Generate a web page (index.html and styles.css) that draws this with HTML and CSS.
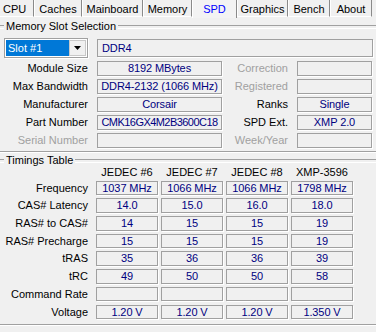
FILE: index.html
```html
<!DOCTYPE html>
<html>
<head>
    <link rel="stylesheet" href="styles.css">
</head>
<body>
    <div class="tabs">
        <div class="tab" style="width: 34px">CPU</div>
        <div class="tab" style="width: 48px">Caches</div>
        <div class="tab" style="width: 61px">Mainboard</div>
        <div class="tab" style="width: 49px">Memory</div>
        <div class="tab active" style="width: 45px">SPD</div>
        <div class="tab" style="width: 51px">Graphics</div>
        <div class="tab" style="width: 42px">Bench</div>
        <div class="tab" style="width: 42px">About</div>
    </div>

    <div class="panel">
        <div class="group-head"><span>Memory Slot Selection</span></div>

        <div class="slot-row">
            <div class="combo">
                <div class="combo-value">Slot #1</div>
                <div class="combo-btn">
                    <svg width="7" height="4" viewBox="0 0 7 4"><polygon points="0,0 7,0 3.5,4" fill="#000"/></svg>
                </div>
            </div>
            <div class="field type-field">DDR4</div>
        </div>

        <div class="info-grid">
            <div class="lbl">Module Size</div>
            <div class="field">8192 MBytes</div>
            <div class="lbl off">Correction</div>
            <div class="field"></div>

            <div class="lbl">Max Bandwidth</div>
            <div class="field">DDR4-2132 (1066 MHz)</div>
            <div class="lbl off">Registered</div>
            <div class="field"></div>

            <div class="lbl">Manufacturer</div>
            <div class="field">Corsair</div>
            <div class="lbl">Ranks</div>
            <div class="field">Single</div>

            <div class="lbl">Part Number</div>
            <div class="field tight">CMK16GX4M2B3600C18</div>
            <div class="lbl">SPD Ext.</div>
            <div class="field">XMP 2.0</div>

            <div class="lbl off">Serial Number</div>
            <div class="field"></div>
            <div class="lbl off">Week/Year</div>
            <div class="field"></div>
        </div>
        <div class="group-end"></div>

        <div class="group-head timings-head"><span>Timings Table</span></div>

        <div class="timing-grid">
            <div></div>
            <div class="col-head">JEDEC #6</div>
            <div class="col-head">JEDEC #7</div>
            <div class="col-head">JEDEC #8</div>
            <div class="col-head">XMP-3596</div>

            <div class="lbl">Frequency</div>
            <div class="field">1037 MHz</div>
            <div class="field">1066 MHz</div>
            <div class="field">1066 MHz</div>
            <div class="field">1798 MHz</div>

            <div class="lbl">CAS# Latency</div>
            <div class="field">14.0</div>
            <div class="field">15.0</div>
            <div class="field">16.0</div>
            <div class="field">18.0</div>

            <div class="lbl">RAS# to CAS#</div>
            <div class="field">14</div>
            <div class="field">15</div>
            <div class="field">15</div>
            <div class="field">19</div>

            <div class="lbl">RAS# Precharge</div>
            <div class="field">15</div>
            <div class="field">15</div>
            <div class="field">15</div>
            <div class="field">19</div>

            <div class="lbl">tRAS</div>
            <div class="field">35</div>
            <div class="field">36</div>
            <div class="field">36</div>
            <div class="field">39</div>

            <div class="lbl">tRC</div>
            <div class="field">49</div>
            <div class="field">50</div>
            <div class="field">50</div>
            <div class="field">58</div>

            <div class="lbl">Command Rate</div>
            <div class="field"></div>
            <div class="field"></div>
            <div class="field"></div>
            <div class="field"></div>

            <div class="lbl">Voltage</div>
            <div class="field">1.20 V</div>
            <div class="field">1.20 V</div>
            <div class="field">1.20 V</div>
            <div class="field">1.350 V</div>
        </div>
        <div class="group-end bottom"></div>
    </div>
</body>
</html>
```

FILE: styles.css
```css
* {
    box-sizing: border-box;
}

body {
    margin: 0;
    padding: 0;
    width: 376px;
    height: 332px;
    overflow: hidden;
    background-color: #f0f0f0;
    font-family: "Liberation Sans", Arial, sans-serif;
    font-size: 11px;
    color: #000;
}

.tabs {
    display: flex;
    height: 18px;
    align-items: flex-start;
}

.tab {
    height: 17px;
    line-height: 16px;
    text-align: center;
    border-left: 1px solid #fff;
    border-right: 1px solid #8a8a8a;
    border-bottom: 1px solid #fff;
    padding-top: 1px;
    white-space: nowrap;
}

.tab:first-child {
    border-left: none;
    text-align: left;
    padding-left: 3px;
}

.tab.active {
    height: 18px;
    color: #0000ff;
    border-bottom: none;
    background-color: #f3f3f3;
}

.panel {
    display: flex;
    flex-direction: column;
}

.group-head {
    display: flex;
    align-items: center;
    height: 13px;
    margin-top: 2px;
}

.group-head::before,
.group-head::after {
    content: "";
    height: 2px;
    border-top: 1px solid #a0a0a0;
    border-bottom: 1px solid #fff;
}

.group-head::before {
    width: 4px;
}

.group-head::after {
    flex: 1;
}

.group-head span {
    padding: 0 2px;
    line-height: 13px;
}

.timings-head {
    margin-top: 1px;
}

.group-end {
    margin-top: 3px;
    height: 2px;
    border-top: 1px solid #a0a0a0;
    border-bottom: 1px solid #fff;
}

.group-end.bottom {
    margin-top: 5px;
}

.slot-row {
    display: flex;
    margin-top: 5px;
    height: 20px;
}

.combo {
    display: flex;
    width: 84px;
    height: 20px;
    margin-left: 4px;
    padding: 1px;
    background-color: #fff;
    border: 1px solid #a0a0a0;
    box-shadow: 1px 1px 0 #fff;
}

.combo-value {
    flex: 1;
    background-color: #0078d7;
    color: #fff;
    line-height: 16px;
    padding-left: 2px;
}

.combo-btn {
    width: 17px;
    display: flex;
    align-items: center;
    justify-content: center;
    background-color: #f0f0f0;
    border: 1px solid #c8c8c8;
}

.field {
    background-color: #f0f0f0;
    border: 1px solid #a0a0a0;
    box-shadow: 1px 1px 0 #fff;
    color: #000080;
    text-align: center;
    white-space: nowrap;
    overflow: hidden;
    line-height: 13px;
    letter-spacing: -0.1px;
}

.field.tight {
    letter-spacing: -0.55px;
}

.type-field {
    flex: 1;
    margin: 1px 3px 0 9px;
    height: 18px;
    line-height: 16px;
    text-align: left;
    padding-left: 4px;
}

.lbl {
    text-align: right;
    white-space: nowrap;
    line-height: 15px;
}

.lbl.off {
    color: #a0a0a0;
}

.info-grid {
    display: grid;
    grid-template-columns: 88px 125px 57px 75px;
    grid-auto-rows: 15px;
    column-gap: 9px;
    row-gap: 3px;
    margin-top: 3px;
}

.timing-grid {
    display: grid;
    grid-template-columns: 93px 62px 62px 62px 62px;
    grid-template-rows: 10.5px repeat(8, 14.5px);
    column-gap: 3px;
    row-gap: 3.2px;
}

.timing-grid .lbl {
    margin-right: 5px;
    line-height: 14.5px;
}

.timing-grid .field {
    line-height: 12.5px;
}

.col-head {
    text-align: center;
    line-height: 10.5px;
    white-space: nowrap;
}
```
